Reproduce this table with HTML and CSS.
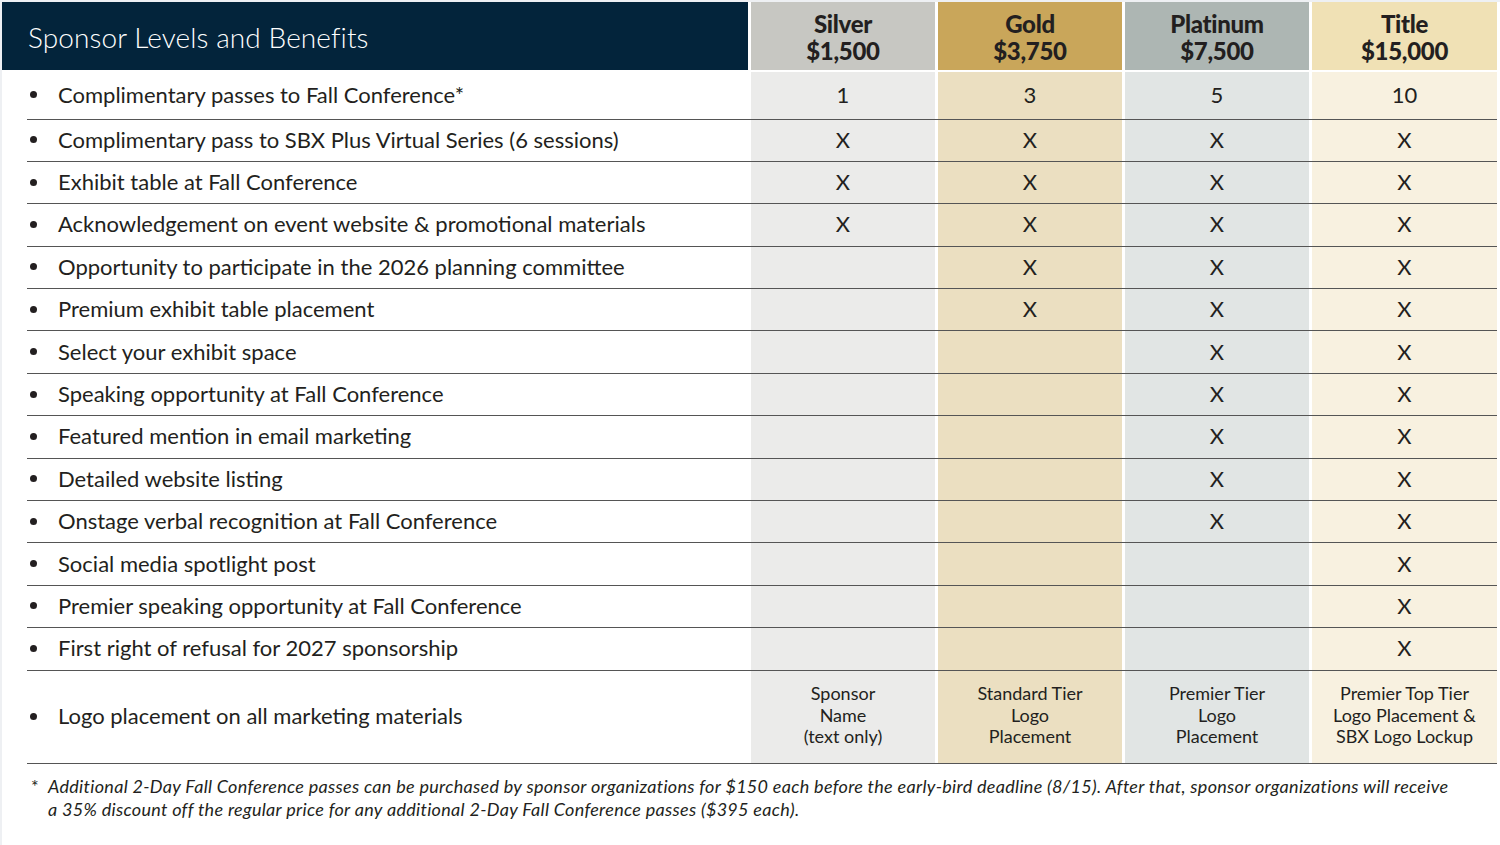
FILE: index.html
```html
<!DOCTYPE html>
<html>
<head>
<meta charset="utf-8">
<link rel="stylesheet" href="styles.css">
</head>
<body>
<div class="page">
  <div class="head">
    <div class="title">Sponsor Levels and Benefits</div>
    <div class="hcell silver">Silver<br>$1,500</div>
    <div class="hcell gold">Gold<br>$3,750</div>
    <div class="hcell plat">Platinum<br>$7,500</div>
    <div class="hcell titl">Title<br>$15,000</div>
  </div>
  <div class="rows">
    <div class="row first"><div class="lab">Complimentary passes to Fall Conference*</div><div class="c silver">1</div><div class="c gold">3</div><div class="c plat">5</div><div class="c titl">10</div></div>
    <div class="row"><div class="lab">Complimentary pass to SBX Plus Virtual Series (6 sessions)</div><div class="c silver">X</div><div class="c gold">X</div><div class="c plat">X</div><div class="c titl">X</div></div>
    <div class="row"><div class="lab">Exhibit table at Fall Conference</div><div class="c silver">X</div><div class="c gold">X</div><div class="c plat">X</div><div class="c titl">X</div></div>
    <div class="row"><div class="lab">Acknowledgement on event website &amp; promotional materials</div><div class="c silver">X</div><div class="c gold">X</div><div class="c plat">X</div><div class="c titl">X</div></div>
    <div class="row"><div class="lab">Opportunity to participate in the 2026 planning committee</div><div class="c silver"></div><div class="c gold">X</div><div class="c plat">X</div><div class="c titl">X</div></div>
    <div class="row"><div class="lab">Premium exhibit table placement</div><div class="c silver"></div><div class="c gold">X</div><div class="c plat">X</div><div class="c titl">X</div></div>
    <div class="row"><div class="lab">Select your exhibit space</div><div class="c silver"></div><div class="c gold"></div><div class="c plat">X</div><div class="c titl">X</div></div>
    <div class="row"><div class="lab">Speaking opportunity at Fall Conference</div><div class="c silver"></div><div class="c gold"></div><div class="c plat">X</div><div class="c titl">X</div></div>
    <div class="row"><div class="lab">Featured mention in email marketing</div><div class="c silver"></div><div class="c gold"></div><div class="c plat">X</div><div class="c titl">X</div></div>
    <div class="row"><div class="lab">Detailed website listing</div><div class="c silver"></div><div class="c gold"></div><div class="c plat">X</div><div class="c titl">X</div></div>
    <div class="row"><div class="lab">Onstage verbal recognition at Fall Conference</div><div class="c silver"></div><div class="c gold"></div><div class="c plat">X</div><div class="c titl">X</div></div>
    <div class="row"><div class="lab">Social media spotlight post</div><div class="c silver"></div><div class="c gold"></div><div class="c plat"></div><div class="c titl">X</div></div>
    <div class="row"><div class="lab">Premier speaking opportunity at Fall Conference</div><div class="c silver"></div><div class="c gold"></div><div class="c plat"></div><div class="c titl">X</div></div>
    <div class="row"><div class="lab">First right of refusal for 2027 sponsorship</div><div class="c silver"></div><div class="c gold"></div><div class="c plat"></div><div class="c titl">X</div></div>
    <div class="row last"><div class="lab">Logo placement on all marketing materials</div><div class="c silver small">Sponsor<br>Name<br>(text only)</div><div class="c gold small">Standard Tier<br>Logo<br>Placement</div><div class="c plat small">Premier Tier<br>Logo<br>Placement</div><div class="c titl small">Premier Top Tier<br>Logo Placement &amp;<br>SBX Logo Lockup</div></div>
  </div>
  <div class="note">
    <span class="ast">*</span>
    <p>Additional 2-Day Fall Conference passes can be purchased by sponsor organizations for $150 each before the early-bird deadline (8/15). After that, sponsor organizations will receive a 35% discount off the regular price for any additional 2-Day Fall Conference passes ($395 each).</p>
  </div>
</div>
</body>
</html>
```
FILE: styles.css
```css
* { box-sizing: border-box; }
html, body { margin: 0; padding: 0; background: #fff; }
body {
  width: 1500px;
  height: 845px;
  overflow: hidden;
  font-family: Lato, "Liberation Sans", sans-serif;
  color: #231f20;
}
.page {
  width: 1500px;
  height: 845px;
  padding: 0 3px 0 0;
  border-left: 2px solid #eef0f3;
  border-top: 2px solid #eef0f3;
}
.head {
  display: grid;
  grid-template-columns: 746px 184px 184px 184px 185px;
  column-gap: 3px;
  height: 68px;
}
.title {
  background: #03243b;
  color: #fff;
  font-size: 28px;
  font-weight: 300;
  letter-spacing: 0.1px;
  display: flex;
  align-items: center;
  padding-left: 26px;
  padding-top: 2px;
}
.hcell {
  font-weight: 900;
  font-size: 24px;
  line-height: 27px;
  text-align: center;
  letter-spacing: -0.3px;
  padding-top: 8px;
  color: #231f20;
}
.hcell.silver { background: #c7c7c2; }
.hcell.gold { background: #c9a65a; }
.hcell.plat { background: #adb6b3; }
.hcell.titl { background: #f0e1b5; }

.rows { margin-top: 2px; margin-left: 25px; }
.row {
  display: grid;
  grid-template-columns: 721px 184px 184px 184px 185px;
  column-gap: 3px;
  height: 42.4px;
  border-bottom: 1.5px solid #555;
}
.row.first { height: 47.5px; }
.row.last { height: 93px; }
.lab {
  display: flex;
  align-items: center;
  font-size: 22px;
  letter-spacing: 0;
  padding-left: 31px;
  padding-bottom: 2px;
  position: relative;
}
.lab::before {
  content: "";
  position: absolute;
  left: 3px;
  top: 50%;
  width: 7px;
  height: 7px;
  margin-top: -4px;
  border-radius: 50%;
  background: #231f20;
}
.c {
  display: flex;
  align-items: center;
  justify-content: center;
  font-size: 22px;
  text-align: center;
  padding-bottom: 2px;
}
.c.small {
  font-size: 18px;
  line-height: 21.5px;
  letter-spacing: 0;
  padding-bottom: 2px;
}
.c.silver { background: #ebebea; }
.c.gold { background: #ebdfc1; }
.c.plat { background: #e1e5e4; }
.c.titl { background: #f8f1e0; }

.note {
  display: flex;
  margin-top: 11px;
  margin-left: 29px;
  font-style: italic;
  font-size: 18px;
  line-height: 23px;
  letter-spacing: 0.3px;
}
.note .ast { width: 17px; flex: none; font-style: normal; }
.note p { margin: 0; width: 1408px; }
```
